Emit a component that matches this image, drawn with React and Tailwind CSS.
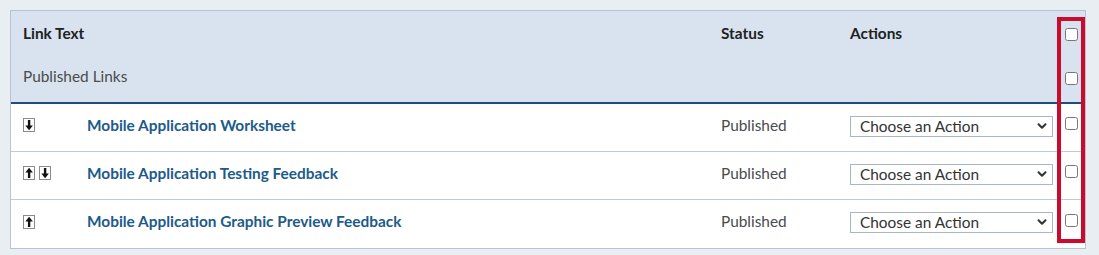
import { ChevronDown } from "lucide-react";

const rows = [
  { title: "Mobile Application Worksheet", up: false, down: true },
  { title: "Mobile Application Testing Feedback", up: true, down: true },
  { title: "Mobile Application Graphic Preview Feedback", up: true, down: false },
];

function ArrowBox({ dir }) {
  return (
    <svg width="12" height="14" viewBox="0 0 12 14" className="block">
      <rect x="0.5" y="0.5" width="11" height="13" fill="#fff" stroke="#8a8a8a" />
      {dir === "down" ? (
        <>
          <rect x="4.9" y="2" width="2.4" height="6.5" fill="#111" />
          <path d="M2.3 7.5 L9.9 7.5 L6.1 12.3 Z" fill="#111" />
        </>
      ) : (
        <>
          <rect x="4.9" y="5.5" width="2.4" height="6.5" fill="#111" />
          <path d="M2.3 6.5 L9.9 6.5 L6.1 1.7 Z" fill="#111" />
        </>
      )}
    </svg>
  );
}

function Checkbox() {
  return <input type="checkbox" className="m-0 w-[13px] h-[13px] block" />;
}

function ActionSelect() {
  return (
    <div className="relative w-[203px]">
      <select className="appearance-none w-full h-[21px] bg-white border border-[#a9b6c6] pl-[9px] text-[15.4px] text-[#333] leading-[19px] outline-none">
        <option>Choose an Action</option>
      </select>
      <ChevronDown
        size={14}
        strokeWidth={3.5}
        className="absolute right-[4px] top-[4px] text-[#333] pointer-events-none"
      />
    </div>
  );
}

export default function App() {
  return (
    <div className="w-[1099px] h-[255px] bg-[#e9eef3] pt-[10px] pl-[10px] font-['Lato',sans-serif]">
      <div className="relative w-[1076px] border border-[#b4c3d6] bg-white">
        <div className="bg-[#d9e3ef] border-b-2 border-[#1d4f7c]">
          <div className="flex items-center h-[45px] text-[15.4px] font-bold text-[#202122]">
            <div className="w-[698px] pl-3">Link Text</div>
            <div className="w-[129px] pl-3">Status</div>
            <div className="w-[217px] pl-3">Actions</div>
            <div className="w-[30px] pl-[10px] pt-[2px]">
              <Checkbox />
            </div>
          </div>
          <div className="flex items-center h-[46px] text-[15.4px] text-[#494c4e]">
            <div className="w-[1044px] pl-3 pb-[4px]">Published Links</div>
            <div className="w-[30px] pl-[10px] pb-[2px]">
              <Checkbox />
            </div>
          </div>
        </div>
        {rows.map((r, i) => (
          <div
            key={r.title}
            className={`flex items-center h-[48px] text-[15.4px] ${i < rows.length - 1 ? "border-b border-[#c1cbd7]" : ""}`}>
            <div className="w-[698px] pl-3 flex items-center">
              <div className="w-[64px] flex gap-[4px] -mt-[4px]">
                {r.up && <ArrowBox dir="up" />}
                {r.down && <ArrowBox dir="down" />}
              </div>
              <a className="font-bold text-[#1c5b8a] pb-[4px]">{r.title}</a>
            </div>
            <div className="w-[129px] pl-3 pb-[4px] text-[#494c4e]">Published</div>
            <div className="w-[217px] pl-3 pb-[2px]">
              <ActionSelect />
            </div>
            <div className="w-[30px] pl-[10px] pb-[8px]">
              <Checkbox />
            </div>
          </div>
        ))}
        <div className="absolute left-[1046px] top-[6px] w-[28px] h-[226px] border-4 border-[#cc0a2c]" />
      </div>
    </div>
  );
}
